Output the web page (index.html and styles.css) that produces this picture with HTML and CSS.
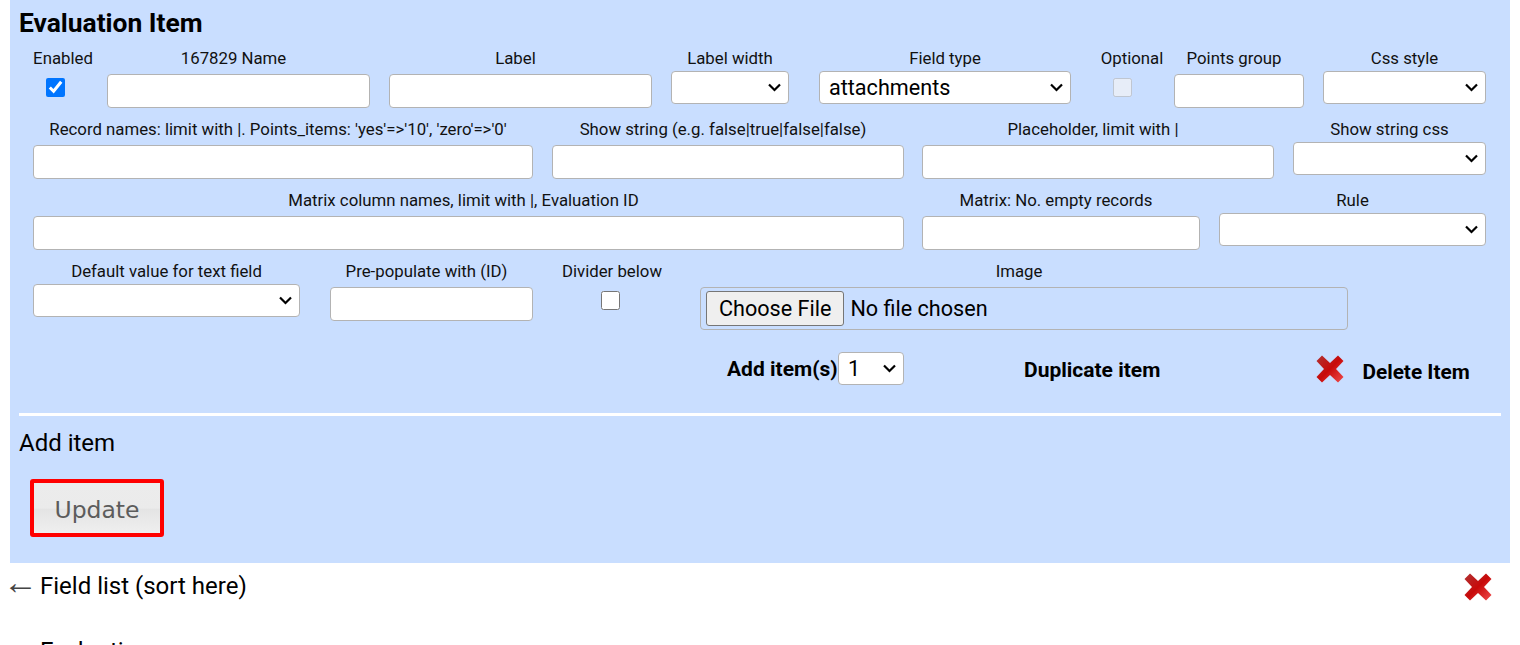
FILE: index.html
```html
<!DOCTYPE html>
<html lang="en">
<head>
    <meta charset="UTF-8">
    <meta name="viewport" content="width=device-width, initial-scale=1.0">
    <title>Evaluation Item</title>
    <link rel="stylesheet" href="styles.css">
</head>
<body>
    <div class="panel">
        <h2 class="panel-title">Evaluation Item</h2>

        <!-- Row 1 -->
        <div class="row">
            <div class="field w-enabled">
                <label>Enabled</label>
                <input type="checkbox" class="check check-enabled" checked>
            </div>
            <div class="field text-field w-name">
                <label>167829 Name</label>
                <input type="text" class="text-input">
            </div>
            <div class="field text-field w-name gap-19">
                <label>Label</label>
                <input type="text" class="text-input">
            </div>
            <div class="field w-labelwidth gap-19">
                <label>Label width</label>
                <select class="select"><option></option></select>
            </div>
            <div class="field w-fieldtype gap-30">
                <label>Field type</label>
                <select class="select select-large"><option>attachments</option></select>
            </div>
            <div class="field w-optional">
                <label>Optional</label>
                <input type="checkbox" class="check check-optional" disabled>
            </div>
            <div class="field text-field w-points">
                <label>Points group</label>
                <input type="text" class="text-input">
            </div>
            <div class="field w-css gap-19">
                <label>Css style</label>
                <select class="select"><option></option></select>
            </div>
        </div>

        <!-- Row 2 -->
        <div class="row">
            <div class="field text-field w-records">
                <label>Record names: limit with |. Points_items: 'yes'=&gt;'10', 'zero'=&gt;'0'</label>
                <input type="text" class="text-input">
            </div>
            <div class="field text-field w-show gap-19">
                <label>Show string (e.g. false|true|false|false)</label>
                <input type="text" class="text-input">
            </div>
            <div class="field text-field w-show gap-18">
                <label>Placeholder, limit with |</label>
                <input type="text" class="text-input">
            </div>
            <div class="field w-showcss gap-19">
                <label>Show string css</label>
                <select class="select"><option></option></select>
            </div>
        </div>

        <!-- Row 3 -->
        <div class="row">
            <div class="field text-field w-matrix">
                <label>Matrix column names, limit with |, Evaluation ID</label>
                <input type="text" class="text-input">
            </div>
            <div class="field text-field w-empty gap-18">
                <label>Matrix: No. empty records</label>
                <input type="text" class="text-input">
            </div>
            <div class="field w-rule gap-19">
                <label>Rule</label>
                <select class="select"><option></option></select>
            </div>
        </div>

        <!-- Row 4 -->
        <div class="row">
            <div class="field w-default">
                <label>Default value for text field</label>
                <select class="select"><option></option></select>
            </div>
            <div class="field text-field w-prepop gap-30">
                <label>Pre-populate with (ID)</label>
                <input type="text" class="text-input">
            </div>
            <div class="field w-divider">
                <label>Divider below</label>
                <input type="checkbox" class="check check-divider">
            </div>
            <div class="field text-field w-image">
                <label>Image</label>
                <input type="file" class="file-input">
            </div>
        </div>

        <!-- Actions -->
        <div class="actions">
            <div class="add-items">
                <span>Add item(s)</span>
                <select class="select select-large select-count"><option>1</option></select>
            </div>
            <span class="duplicate">Duplicate item</span>
            <svg class="x-icon x-delete" viewBox="0 0 30 30">
                <use href="#red-x"></use>
            </svg>
            <span class="delete">Delete Item</span>
        </div>

        <hr class="divider">

        <div class="add-item">Add item</div>
        <button class="update-btn">Update</button>
    </div>

    <div class="field-list">
        <span class="arrow">&larr;</span>Field list (sort here)
        <svg class="x-icon x-list" viewBox="0 0 30 30">
            <use href="#red-x"></use>
        </svg>
    </div>
    <div class="eval-line">Evaluation</div>

    <svg class="defs" width="0" height="0">
        <defs>
            <linearGradient id="x-fill" x1="0" y1="0" x2="1" y2="1">
                <stop offset="0" stop-color="#b03333"/>
                <stop offset="0.5" stop-color="#c80a0a"/>
                <stop offset="1" stop-color="#f04c4c"/>
            </linearGradient>
            <g id="red-x">
                <path d="M1.5 7 L7 1.5 L15 9 L23 1.5 L28.5 7 L21 15 L28.5 23 L23 28.5 L15 21 L7 28.5 L1.5 23 L9 15 Z" fill="url(#x-fill)"/>
            </g>
        </defs>
    </svg>
</body>
</html>
```

FILE: styles.css
```css
html, body {
    margin: 0;
    padding: 0;
    height: 645px;
    overflow: hidden;
}
body {
    font-family: Roboto, "Liberation Sans", sans-serif;
    color: #000;
    background: #fff;
}
.panel {
    margin: 0 10px;
    height: 563px;
    padding: 0 9px;
    box-sizing: border-box;
    background: #c9deff;
    overflow: hidden;
}
.panel-title {
    margin: 0;
    padding-top: 8px;
    height: 42px;
    box-sizing: border-box;
    font-size: 26.4px;
    line-height: 31px;
    font-weight: 700;
}
.row {
    display: flex;
    align-items: flex-start;
    height: 71px;
    padding-left: 14px;
}
.field {
    display: flex;
    flex-direction: column;
    align-items: center;
    flex: none;
}
.field label {
    display: block;
    font-size: 16.8px;
    line-height: 19px;
    height: 19px;
    margin-top: 7px;
    margin-bottom: 3px;
    white-space: nowrap;
    color: #111;
}
.text-field label {
    margin-right: 10px;
}
.gap-18 { margin-left: 18px; }
.gap-19 { margin-left: 19px; }
.gap-30 { margin-left: 30px; }

.w-enabled { width: 60px; margin-right: 14px; }
.w-name { width: 263px; }
.w-labelwidth { width: 118px; }
.w-fieldtype { width: 252px; margin-right: 30px; }
.w-optional { width: 62px; margin-right: 11px; }
.w-points { width: 130px; }
.w-css { width: 163px; }
.w-records { width: 500px; }
.w-show { width: 352px; }
.w-showcss { width: 193px; }
.w-matrix { width: 871px; }
.w-empty { width: 278px; }
.w-rule { width: 267px; }
.w-default { width: 267px; }
.w-prepop { width: 203px; }
.w-divider { width: 110px; margin-left: 24px; margin-right: 0; }
.w-image { width: 648px; margin-left: 33px; }

.text-input {
    width: 100%;
    height: 34px;
    margin-top: 3px;
    box-sizing: border-box;
    border: 1px solid #b3b3b3;
    border-radius: 4px;
    background: #fff;
    outline: none;
}
.select {
    appearance: none;
    width: 100%;
    height: 33px;
    box-sizing: border-box;
    border: 1px solid #b3b3b3;
    border-radius: 4px;
    background-color: #fff;
    background-image: url("data:image/svg+xml,%3Csvg xmlns='http://www.w3.org/2000/svg' width='13' height='9' viewBox='0 0 13 9'%3E%3Cpath d='M1 1.5 L6.5 7 L12 1.5' fill='none' stroke='%23000' stroke-width='2.2'/%3E%3C/svg%3E");
    background-repeat: no-repeat;
    background-position: right 7px center;
    font-family: Roboto, sans-serif;
    font-size: 16px;
    color: #000;
    outline: none;
}
.select-large {
    font-size: 21.6px;
    padding-left: 9px;
}
.select-count {
    width: 66px;
}
.check {
    margin: 7px 0 0;
    width: 19px;
    height: 19px;
    accent-color: #0075ff;
}
.check-enabled { margin-right: 16px; }
.check-optional { margin-right: 20px; }
.check-divider { margin-right: 3px; }

.file-input {
    width: 100%;
    height: 43px;
    margin-top: 3px;
    padding: 3px 5px;
    box-sizing: border-box;
    border: 1px solid #b3b3b3;
    border-radius: 4px;
    font-family: Roboto, sans-serif;
    font-size: 21.6px;
    line-height: 30px;
}
.file-input::file-selector-button {
    height: 35px;
    padding: 0 12px;
    margin-right: 6px;
    border: 1px solid #767676;
    border-radius: 3px;
    background: #efefef;
    font: inherit;
}

.actions {
    height: 61px;
    margin-top: 26px;
    font-size: 21px;
    font-weight: 700;
    display: flex;
    align-items: flex-start;
    padding-left: 708px;
}
.add-items {
    display: flex;
    align-items: center;
    width: 177px;
    height: 33px;
    justify-content: space-between;
}
.duplicate {
    margin-left: 120px;
    margin-top: 6px;
    line-height: 24px;
}
.x-icon {
    width: 30px;
    height: 30px;
    flex: none;
    filter: blur(0.5px);
}
.x-delete {
    margin-left: 155px;
    margin-top: 2px;
}
.delete {
    margin-left: 17px;
    margin-top: 8px;
    font-size: 20.8px;
    line-height: 24px;
}
.divider {
    margin: 0;
    border: none;
    height: 3px;
    background: #fff;
}
.add-item {
    margin-top: 14px;
    font-size: 24px;
    line-height: 27px;
}
.update-btn {
    display: block;
    width: 134px;
    height: 58px;
    margin: 22px 0 0 11px;
    padding: 4px 0 0;
    box-sizing: border-box;
    border: 4px solid #ff0000;
    border-radius: 3px;
    background: linear-gradient(#ececec 0%, #ebebeb 50%, #e4e4e4 53%, #efefef 100%);
    color: #5c5c5c;
    font-family: "DejaVu Sans", sans-serif;
    font-size: 23.5px;
}
.field-list {
    position: relative;
    margin: 9px 10px 0;
    font-size: 24px;
    line-height: 27px;
}
.arrow {
    display: inline-block;
    width: 37px;
    margin-left: -7px;
    font-family: "Liberation Sans", sans-serif;
    font-size: 35px;
    line-height: 20px;
    color: #444;
}
.x-list {
    position: absolute;
    left: 1453px;
    top: 0;
}
.eval-line {
    margin: 38px 0 0 40px;
    font-size: 24px;
    line-height: 27px;
}
.defs {
    position: absolute;
}
```
